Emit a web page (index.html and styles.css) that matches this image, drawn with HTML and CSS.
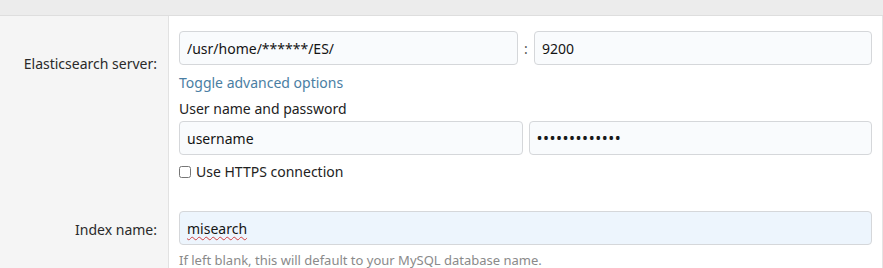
FILE: index.html
```html
<!DOCTYPE html>
<html>
<head>
<meta charset="utf-8">
<link rel="stylesheet" href="styles.css">
</head>
<body>
<div class="topbar"></div>
<div class="form">
  <div class="row row-server">
    <div class="label">Elasticsearch server:</div>
    <div class="field">
      <div class="pair">
        <input class="input host" type="text" value="/usr/home/******/ES/">
        <span class="colon">:</span>
        <input class="input port" type="text" value="9200">
      </div>
      <a class="toggle" href="#">Toggle advanced options</a>
      <div class="sublabel">User name and password</div>
      <div class="pair creds">
        <input class="input" type="text" value="username">
        <input class="input pass" type="password" value="abcdefghijklm">
      </div>
      <label class="check"><input type="checkbox" class="box"><span>Use HTTPS connection</span></label>
    </div>
  </div>
  <div class="row row-index">
    <div class="label">Index name:</div>
    <div class="field">
      <div class="spellwrap">
        <input class="input index" type="text" value="misearch">
        <span class="squiggle" aria-hidden="true">misearch</span>
      </div>
      <div class="hint">If left blank, this will default to your MySQL database name.</div>
    </div>
  </div>
</div>
</body>
</html>
```
FILE: styles.css
```css
html, body {
  margin: 0;
  padding: 0;
  background: #ffffff;
  font-family: "Noto Sans", "Open Sans", sans-serif;
  font-size: 14px;
  color: #141414;
  overflow: hidden;
}
.topbar {
  height: 15px;
  background: #ececec;
  border-bottom: 1px solid #dedede;
}
.form {
  display: flex;
  flex-direction: column;
  border-right: 1px solid #e4e4e4;
}
.row {
  display: flex;
}
.label {
  width: 157px;
  flex: none;
  box-sizing: content-box;
  padding-right: 11px;
  background: #f5f5f5;
  border-right: 1px solid #e2e2e2;
  text-align: right;
  color: #2a2a2a;
  line-height: 20px;
}
.row-server .label { padding-top: 38px; }
.row-index .label { padding-top: 24px; }
.field {
  flex: 1;
  display: flex;
  flex-direction: column;
  padding: 15px 10px 0 10px;
  min-width: 0;
}
.row-server .field { padding-bottom: 13px; }
.row-index .field { padding-top: 15px; padding-bottom: 20px; }
.pair {
  display: flex;
  align-items: center;
}
.input {
  box-sizing: border-box;
  height: 34px;
  border: 1px solid #d5d7da;
  border-radius: 4px;
  background: #f9fbfd;
  font-family: inherit;
  font-size: 14px;
  color: #141414;
  padding: 0 7px;
  outline: none;
  min-width: 0;
}
.host { flex: 0 0 339px; }
.colon {
  width: 16px;
  text-align: center;
  color: #555;
}
.port { flex: 1; }
.toggle {
  margin-top: 8px;
  line-height: 20px;
  color: #4a7ea3;
  text-decoration: none;
  align-self: flex-start;
}
.sublabel {
  margin-top: 6px;
  line-height: 20px;
  color: #222;
}
.creds {
  margin-top: 2px;
  gap: 6px;
}
.creds .input { flex: 1; }
.pass {
  font-size: 16px;
  letter-spacing: 0.5px;
  color: #1a1a1a;
}
.check {
  display: flex;
  align-items: center;
  margin-top: 6px;
  line-height: 22px;
  color: #222;
}
.box {
  margin: 0 5px 0 0;
  width: 12px;
  height: 12px;
}
.spellwrap {
  position: relative;
}
.index {
  width: 100%;
  background: #edf5fd;
}
.squiggle {
  position: absolute;
  left: 8px;
  top: 7px;
  line-height: 20px;
  color: transparent;
  text-decoration: underline wavy #d04040;
  text-decoration-thickness: 1px;
  text-underline-offset: 3px;
  pointer-events: none;
}
.hint {
  margin-top: 6px;
  color: #8a8a8a;
  font-size: 13px;
  line-height: 18px;
}
```
